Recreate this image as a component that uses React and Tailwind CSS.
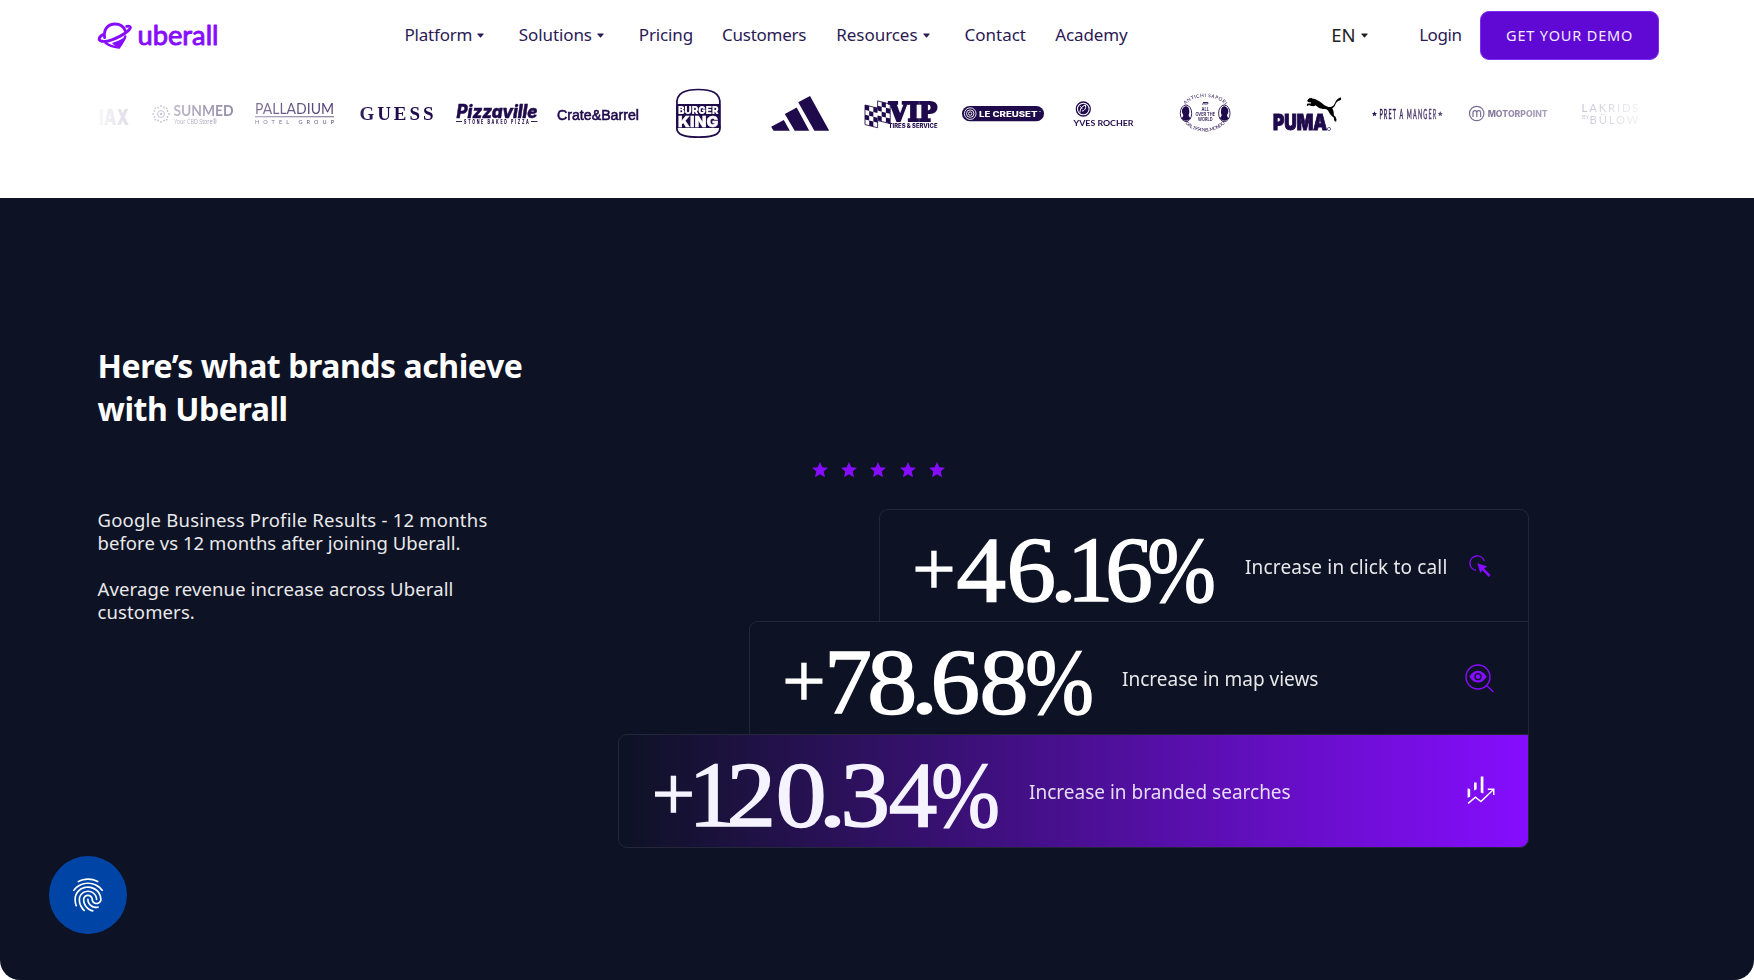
import React from 'react';
import { MdFingerprint } from 'react-icons/md';
import { SiPuma } from 'react-icons/si';

const INK = '#1f0a4b';

/* ---------- Header ---------- */

const navItems = [
  { label: 'Platform', menu: true, className: 'w-[84.3px] mr-[30px] tracking-[-0.2px]' },
  { label: 'Solutions', menu: true, className: 'w-[90px] mr-[30px] tracking-[-0.1px]' },
  { label: 'Pricing', className: 'w-[54px] mr-[29.2px] tracking-[-0.15px]' },
  { label: 'Customers', className: 'w-[84.3px] mr-[30px] tracking-[-0.25px]' },
  { label: 'Resources', menu: true, className: 'w-[98.2px] mr-[30px] tracking-[-0.05px]' },
  { label: 'Contact', className: 'w-[61px] mr-[29.7px]' },
  { label: 'Academy', className: 'w-[74px] tracking-[-0.1px]' },
];

function Caret() {
  return (
    <svg width="7" height="5" viewBox="0 0 7 5" fill="currentColor" className="shrink-0">
      <path d="M.9.4h5.2c.5 0 .7.5.4.9L4 4.2a.7.7 0 0 1-1 0L.5 1.3C.2.9.4.4.9.4Z" />
    </svg>
  );
}

function UberallLogo() {
  return (
    <svg width="121" height="30" viewBox="0 0 121 30" fill="none" className="shrink-0 overflow-visible text-[#860dff]">
      <g stroke="currentColor" strokeWidth="2.9" strokeLinecap="round" strokeLinejoin="round">
        <path d="M6.600 16.500C5.200 8 10.500 3 17 3c5 0 8.700 2.600 10.300 6.800" />
        <path d="M4.500 13.700C1 16.100.400 18.500 2.200 19.600c3.800 2 12.500-.6 20-4.500 6.600-3.500 11-7.400 10-9.100-.5-.9-1.800-1-3.500-.6" />
        <path d="M7.500 21.900c3.400 2.800 7.800 4 13.500 4.700 2-3.600 5.500-7 6.300-11.200" strokeWidth="2.400" />
      </g>
      <path d="M14 22c5-1.300 9-3.400 12.300-5.700-.7 3.600-3.300 6.500-4.900 9.700-2.800 0-5.200-1.600-7.400-4Z" fill="currentColor" />
      <text x="39.500" y="23.700" fontFamily="Lato, sans-serif" fontSize="26" fill="currentColor" stroke="currentColor" strokeWidth="0.9" strokeLinejoin="round" textLength="81" lengthAdjust="spacingAndGlyphs">
        uberall
      </text>
    </svg>
  );
}

function Header() {
  return (
    <header className="flex h-[71px] items-center pl-[98px] text-[17px] text-[#2b1a55]">
      <UberallLogo />
      <nav className="-mt-[1px] ml-[185.5px] flex items-center">
        {navItems.map((item) => (
          <a key={item.label} className={`flex items-center gap-[5px] whitespace-nowrap ${item.className}`}>
            {item.label}
            {item.menu && <Caret />}
          </a>
        ))}
      </nav>
      <div className="ml-[202px] flex items-center">
        <span className="-mt-[1px] flex w-[88px] items-center gap-[5px] text-[18.5px] text-[#222]">
          EN
          <Caret />
        </span>
        <a className="-mt-[1px] w-[61px] tracking-[-0.45px]">Login</a>
        <button className="flex h-[49px] w-[179px] items-center justify-center rounded-[9px] border border-[#7c2ff0] bg-[#6008d4] text-[14.5px] tracking-[0.85px] text-[#f3ecff]">
          GET YOUR DEMO
        </button>
      </div>
    </header>
  );
}

/* ---------- Brand logos ---------- */

// A line of lettering squeezed or stretched to a fixed width
function Word({ x, y, w, size, font = 'Inter', children, ...rest }) {
  return (
    <text x={x} y={y} fontSize={size} fontFamily={`"${font}", sans-serif`} textLength={w} lengthAdjust="spacingAndGlyphs" {...rest}>
      {children}
    </text>
  );
}

function Logo({ children }) {
  return (
    <svg width="82" height="50" viewBox="0 0 82 50" fill={INK} className="shrink-0 overflow-visible">
      {children}
    </svg>
  );
}

const sunDots = [
  [0, -8], [5.7, -5.7], [8, 0], [5.7, 5.7], [0, 8], [-5.7, 5.7], [-8, 0], [-5.7, -5.7],
  [3, -6.5], [6.5, -3], [6.5, 3], [3, 6.5], [-3, 6.5], [-6.5, 3], [-6.5, -3], [-3, -6.5],
];

const flagSquares = [
  [0, 0], [2, 0], [4, 0], [1, 1], [3, 1], [5, 1], [0, 2], [2, 2], [4, 2], [1, 3], [3, 3], [5, 3],
];

function Logos() {
  return (
    <div className="mt-[17px] ml-[98px] w-[1558px] overflow-hidden [mask-image:linear-gradient(to_right,rgba(0,0,0,0.03),black_290px,black_1260px,transparent)]">
      <div className="-ml-[47.25px] flex gap-[19.25px]">
        <Logo>
          <Word x="48" y="36.800" w="30" size="21.500" fontWeight="900">IAX</Word>
        </Logo>
        <Logo>
          {sunDots.map(([x, y]) => (
            <circle key={`${x},${y}`} cx={9 + x} cy={26 + y} r="0.9" />
          ))}
          <circle cx="9" cy="26" r="3.400" fill="none" stroke={INK} strokeWidth="1" />
          <circle cx="9" cy="26" r="1.200" />
          <Word x="21.500" y="27.500" w="60" size="15" font="Lato" fontWeight="700">SUNMED</Word>
          <Word x="22" y="35.500" w="43" size="7" font="Noto Sans">Your CBD Store®</Word>
        </Logo>
        <Logo>
          <Word x="2" y="26.200" w="79" size="14.500" font="Lato">PALLADIUM</Word>
          <rect x="2" y="28.400" width="79" height="0.8" />
          <Word x="2" y="36" w="79" size="5.500" font="Lato" lengthAdjust="spacing">HOTEL GROUP</Word>
        </Logo>
        <Logo>
          <Word x="4.500" y="31.800" w="74" size="19" font="Liberation Serif" fontWeight="700" lengthAdjust="spacing">GUESS</Word>
        </Logo>
        <Logo>
          <Word x="0.5" y="29.600" w="81" size="18.500" fontWeight="800" fontStyle="italic" stroke={INK} strokeWidth="0.5">Pizzaville</Word>
          <rect x="0" y="33" width="6" height="0.9" />
          <rect x="75" y="33" width="6.500" height="0.9" />
          <Word x="13.500" y="36" w="108" size="6" fontWeight="800" lengthAdjust="spacing" transform="scale(.6 1)">STONE BAKED PIZZA</Word>
        </Logo>
        <Logo>
          <Word x="0" y="31.500" w="82" size="15.300" font="Liberation Sans" stroke={INK} strokeWidth="0.6">Crate&amp;Barrel</Word>
        </Logo>
        <Logo>
          <path d="M19 17C17.500 4.500 28 1.500 40.400 1.500S63.300 4.500 61.800 17" fill="none" stroke={INK} strokeWidth="1.700" />
          <path d="M19 38c-1.200 6.500 2 11.200 21.400 11.200S63 44.500 61.800 38" fill="none" stroke={INK} strokeWidth="1.700" />
          <rect x="18" y="16" width="44.800" height="24" rx="1.500" />
          <Word x="20" y="25.700" w="40.500" size="11" fontWeight="900" fill="white">BURGER</Word>
          <Word x="20" y="38.500" w="40.500" size="15" fontWeight="900" fill="white" stroke="white" strokeWidth="0.3">KING</Word>
        </Logo>
        <Logo>
          <path d="m11.200 38.700 12.600-6.700 6 10.700H13.500ZM24.800 26l11.900-6.500L49.200 42.700H34.700ZM38.200 14.300 50 8l19.200 34.700H54.400Z" />
        </Logo>
        <Logo>
          <g transform="translate(4 17) rotate(14) skewX(14)">
            {flagSquares.map(([x, y]) => (
              <rect key={`${x},${y}`} x={x * 4.3} y={y * 4.7} width="4.300" height="4.700" transform={`translate(0 ${x > 2 ? -7 : 0})`} />
            ))}
            <path d="M0 0h13v-7h13v19H13v7H0Z" fill="none" stroke={INK} strokeWidth="0.8" />
          </g>
          <Word x="28" y="33" w="48" size="26" font="DejaVu Serif" fontWeight="700" stroke={INK} strokeWidth="2.200">VIP</Word>
          <Word x="27.500" y="40.300" w="49" size="6.200" fontWeight="800">TIRES &amp; SERVICE</Word>
        </Logo>
        <Logo>
          <rect x="0" y="18" width="82" height="15.300" rx="7.600" />
          <g fill="none" stroke="white" strokeWidth="0.9">
            <circle cx="8.200" cy="25.600" r="5.800" />
            <circle cx="8.200" cy="25.600" r="3.700" />
            <circle cx="8.200" cy="25.600" r="1.700" />
          </g>
          <Word x="17" y="28.500" w="58.500" size="7.800" fontWeight="800" fill="white">LE CREUSET</Word>
          <circle cx="78" cy="23.500" r="0.6" fill="white" />
        </Logo>
        <Logo>
          <circle cx="20.300" cy="21" r="7" fill="none" stroke={INK} strokeWidth="1.300" />
          <circle cx="20.300" cy="21" r="5.300" />
          <path d="M17 24.500c0-3.500 1.500-6 5.500-7.500.8 3.500-.8 5.500-3.500 6.200M17 18.500c1 .3 1.800 1.200 2 2.600" fill="none" stroke="white" strokeWidth="1" />
          <Word x="10.500" y="37.600" w="60" size="7.600" font="Lato" fontWeight="700">YVES ROCHER</Word>
        </Logo>
        <Logo>
          <path id="ringTop" d="M19 18C28 6 52 6 61 18" fill="none" />
          <path id="ringBottom" d="M19 34C29 46.500 51 46.500 61 34" fill="none" />
          <text fontSize="4.800" fontFamily="Lato, sans-serif"><textPath href="#ringTop" textLength="44" startOffset="2">ANTICHI SAPORI</textPath></text>
          <text fontSize="4.600" fontFamily="Lato, sans-serif"><textPath href="#ringBottom" textLength="44" startOffset="2">DAL 1954 NEL MONDO</textPath></text>
          <g fill="none" stroke={INK} strokeWidth="0.9">
            <ellipse cx="21" cy="25.300" rx="5.700" ry="8.300" />
            <ellipse cx="59.300" cy="25.300" rx="5.700" ry="8.300" />
            <path d="M37 16.500c2-2 4 1 6.500-1.500M38 14.500h5" />
          </g>
          <path d="M18 20c2.500-3 6-1.800 6.200 2 .2 2 .4 3.300-.6 5 .2 1.500 1 2.400 2 3.200-2.500 3.300-7 3.300-9.200 0 1.400-1 2-2 1.800-3.400-1.700-2-1.700-4.800-.2-6.800Z" />
          <path d="M62.300 20c-2.500-3-6-1.800-6.200 2-.2 2-.4 3.300.6 5-.2 1.500-1 2.400-2 3.200 2.500 3.300 7 3.300 9.200 0-1.400-1-2-2-1.800-3.400 1.700-2 1.700-4.800.2-6.800Z" />
          <Word x="36.500" y="23" w="7.500" size="4.500" fontWeight="600">ALL</Word>
          <Word x="30.500" y="28" w="19.500" size="4.500" fontWeight="600">OVER THE</Word>
          <Word x="33" y="33" w="14.500" size="4.500" fontWeight="600">WORLD</Word>
        </Logo>
        <Logo>
          <Word x="7" y="42.300" w="54" size="22" fontWeight="900" stroke={INK} strokeWidth="1">PUMA</Word>
          <svg x="40.500" y="6" width="35" height="31" viewBox="0 0 35 35" preserveAspectRatio="none">
            <SiPuma size={35} />
          </svg>
          <circle cx="63" cy="41" r="1.600" fill="none" stroke={INK} strokeWidth="0.6" />
        </Logo>
        <Logo>
          <path d="m7.500 23.200.8 1.700 1.800.2-1.400 1.200.4 1.900-1.600-1-1.700 1 .4-1.900-1.300-1.200 1.800-.2ZM73.300 23.200l.8 1.700 1.800.2-1.400 1.200.4 1.900-1.600-1-1.700 1 .4-1.900-1.300-1.200 1.800-.2Z" />
          <Word x="31" y="30.700" w="142" size="13.500" font="Lato" lengthAdjust="spacing" stroke={INK} strokeWidth="0.6" transform="scale(.4 1)">PRET A MANGER</Word>
        </Logo>
        <Logo>
          <circle cx="8.700" cy="25.500" r="7.200" fill="none" stroke={INK} strokeWidth="1.200" />
          <path d="M5 29v-4.500a1.900 1.900 0 0 1 3.800 0V29M8.800 24.500a1.900 1.900 0 0 1 3.800 0V29" fill="none" stroke={INK} strokeWidth="1.200" />
          <Word x="19.700" y="28.700" w="60" size="8.800" fontWeight="800">MOTORPOINT</Word>
        </Logo>
        <Logo>
          <Word x="11.500" y="24" w="57" size="11.300" font="Lato" lengthAdjust="spacing">LAKRIDS</Word>
          <Word x="12" y="31" w="7" size="5" font="Lato">BY</Word>
          <Word x="19.500" y="35.700" w="49" size="11.300" font="Lato" lengthAdjust="spacing">BÜLOW</Word>
        </Logo>
      </div>
    </div>
  );
}

/* ---------- Stats ---------- */

function ClickIcon() {
  return (
    <svg width="22" height="22" viewBox="0 0 22 22" fill="none" className="mt-[1px]">
      <path d="M15.200 6A7.300 7.300 0 1 0 7 15.400" stroke="#860dff" strokeWidth="1.400" />
      <path d="m8.300 8.300 10.200 3.200-3.500 2 6.600 6.500-1.900 1.900-6.500-6.600-1.900 2.700Z" fill="#860dff" />
    </svg>
  );
}

function MapViewIcon() {
  return (
    <svg width="30" height="30" viewBox="0 0 30 30" fill="none" stroke="#860dff" strokeWidth="1.400" className="mt-[1px]">
      <circle cx="13" cy="14" r="12" />
      <path d="m21.500 22.500 7 6.500" />
      <path d="M4.300 13.700c4.800-7.800 12.600-7.800 17.400 0-4.800 7.800-12.600 7.800-17.400 0Z" fill="#860dff" stroke="none" />
      <circle cx="13" cy="13.700" r="3" stroke="#0d1224" strokeWidth="1.300" />
    </svg>
  );
}

function SearchesIcon() {
  return (
    <svg width="29" height="29" viewBox="0 0 29 29" fill="white" className="ml-[2px]">
      <path d="M.6 12.300h1.400l1.300 1.200V21L.6 22ZM7.300 6.300h2.700v6.900l-2.700 1.200ZM14.200 0h2.800v17.700l-2.800-1Z" />
      <path d="m1.200 27.800 7.500-6.400 5.700 4.500L27.200 13.800M21.500 13.200h6.200v6" fill="none" stroke="white" strokeWidth="1.500" />
    </svg>
  );
}

// Every digit carries its own kerning
const stats = [
  {
    plus: 'mr-[2.7px]',
    digits: [
      ['4', 'mr-[3.7px] scale-x-107'], ['6', 'mr-[-2.4px] scale-x-107'], ['.', 'mr-[-8px] scale-x-125'],
      ['1', 'mr-[-6.9px]'], ['6', 'mr-[-9.4px] scale-x-103'], ['%', 'scale-x-89'],
    ],
    label: 'Increase in click to call',
    icon: <ClickIcon />,
    card: 'h-[112.3px] w-[650.5px] rounded-t-[9px] border-b-0 text-white',
    number: 'w-[332.5px]',
    labelClass: 'tracking-[0.16px]',
  },
  {
    plus: 'mr-[-0.2px]',
    digits: [
      ['7', 'mr-[-2.5px] scale-x-103'], ['8', 'mr-[-2.2px] scale-x-108'], ['.', 'mr-[-3.7px] scale-x-125'],
      ['6', 'mr-[2.3px] scale-x-107'], ['8', 'mr-[-6.6px] scale-x-106'], ['%', 'scale-x-89'],
    ],
    label: 'Increase in map views',
    icon: <MapViewIcon />,
    card: 'h-[112.3px] w-[780.5px] rounded-tl-[9px] border-b-0 text-white',
    number: 'w-[339.5px]',
    labelClass: '',
  },
  {
    plus: 'mr-[-6.2px]',
    digits: [
      ['1', 'mr-[-6.8px]'], ['2', 'mr-[3.2px] scale-x-107'], ['0', 'mr-[-2.9px] scale-x-110'], ['.', 'mr-[-2px] scale-x-125'],
      ['3', 'mr-[1.2px] scale-x-107'], ['4', 'mr-[-8.9px] scale-x-105'], ['%', 'scale-x-89'],
    ],
    label: 'Increase in branded searches',
    icon: <SearchesIcon />,
    card: 'h-[114px] w-[911px] rounded-l-[9px] rounded-br-[9px] bg-linear-to-r/srgb from-[#0d1224] to-[#860dff] text-[#f4f3ff]',
    number: 'w-[377px]',
    labelClass: '',
  },
];

function StatCard({ stat }) {
  return (
    <div className={`flex items-center border border-[#24273a] pl-[33px] ${stat.card}`}>
      <div className={`flex shrink-0 items-center font-['Liberation_Serif'] ${stat.number}`}>
        <span className={`pt-[4.5px] text-[76px] leading-[80px] [-webkit-text-stroke:1.5px_currentColor] ${stat.plus}`}>+</span>
        <span className="pt-[8px] text-[92.5px] leading-[100px] whitespace-nowrap [-webkit-text-stroke:1.5px_currentColor]">
          {stat.digits.map(([digit, kern], i) => (
            <span key={i} className={`inline-block ${kern}`}>{digit}</span>
          ))}
        </span>
      </div>
      <span className={`pt-[2.5px] text-[19px] opacity-90 ${stat.labelClass}`}>{stat.label}</span>
      <span className="mr-[33.5px] ml-auto flex w-[30px] shrink-0 justify-center">{stat.icon}</span>
    </div>
  );
}

function Results() {
  return (
    <section className="flex h-[782px] rounded-b-[20px] bg-[#0d1224] text-white">
      <div className="w-[618px] shrink-0 pt-[147px] pl-[97.5px]">
        <h2 className="text-[32px] leading-[42.7px] font-bold tracking-[-0.44px]">
          Here’s what brands achieve
          <br />
          with Uberall
        </h2>
        <div className="mt-[77.5px] text-[18.5px] leading-[23.2px] text-[#e9e9ec]">
          <p>
            <span className="block tracking-[0.22px]">Google Business Profile Results - 12 months</span>
            <span className="block tracking-[0.05px]">before vs 12 months after joining Uberall.</span>
          </p>
          <p className="mt-[22.5px]">
            <span className="block tracking-[0.12px]">Average revenue increase across Uberall</span>
            <span className="block tracking-[0.12px]">customers.</span>
          </p>
        </div>
      </div>
      <div className="flex w-[911px] flex-col items-end pt-[263.5px]">
        <div className="mr-auto mb-[31.5px] flex gap-[13.35px] pl-[193.7px] text-[#860dff]">
          {[1, 2, 3, 4, 5].map((n) => (
            <svg key={n} width="16" height="16" viewBox="0 0 16 16" fill="currentColor">
              <path d="m8 0 2.300 5.200 5.700.6-4.300 3.800 1.300 5.700L8 12.300l-5 3 1.300-5.700L0 5.800l5.700-.6Z" />
            </svg>
          ))}
        </div>
        {stats.map((stat) => (
          <StatCard key={stat.label} stat={stat} />
        ))}
      </div>
    </section>
  );
}

export default function App() {
  return (
    <div className="relative h-[980px] w-[1754px] overflow-hidden bg-white font-['Noto_Sans',sans-serif]">
      <Header />
      <Logos />
      <div className="mt-[60px]">
        <Results />
      </div>

      {/* Privacy settings */}
      <button className="absolute top-[856px] left-[49px] flex size-[78px] items-center justify-center rounded-full bg-[#0045a5] text-white">
        <MdFingerprint size={40} />
      </button>
    </div>
  );
}
